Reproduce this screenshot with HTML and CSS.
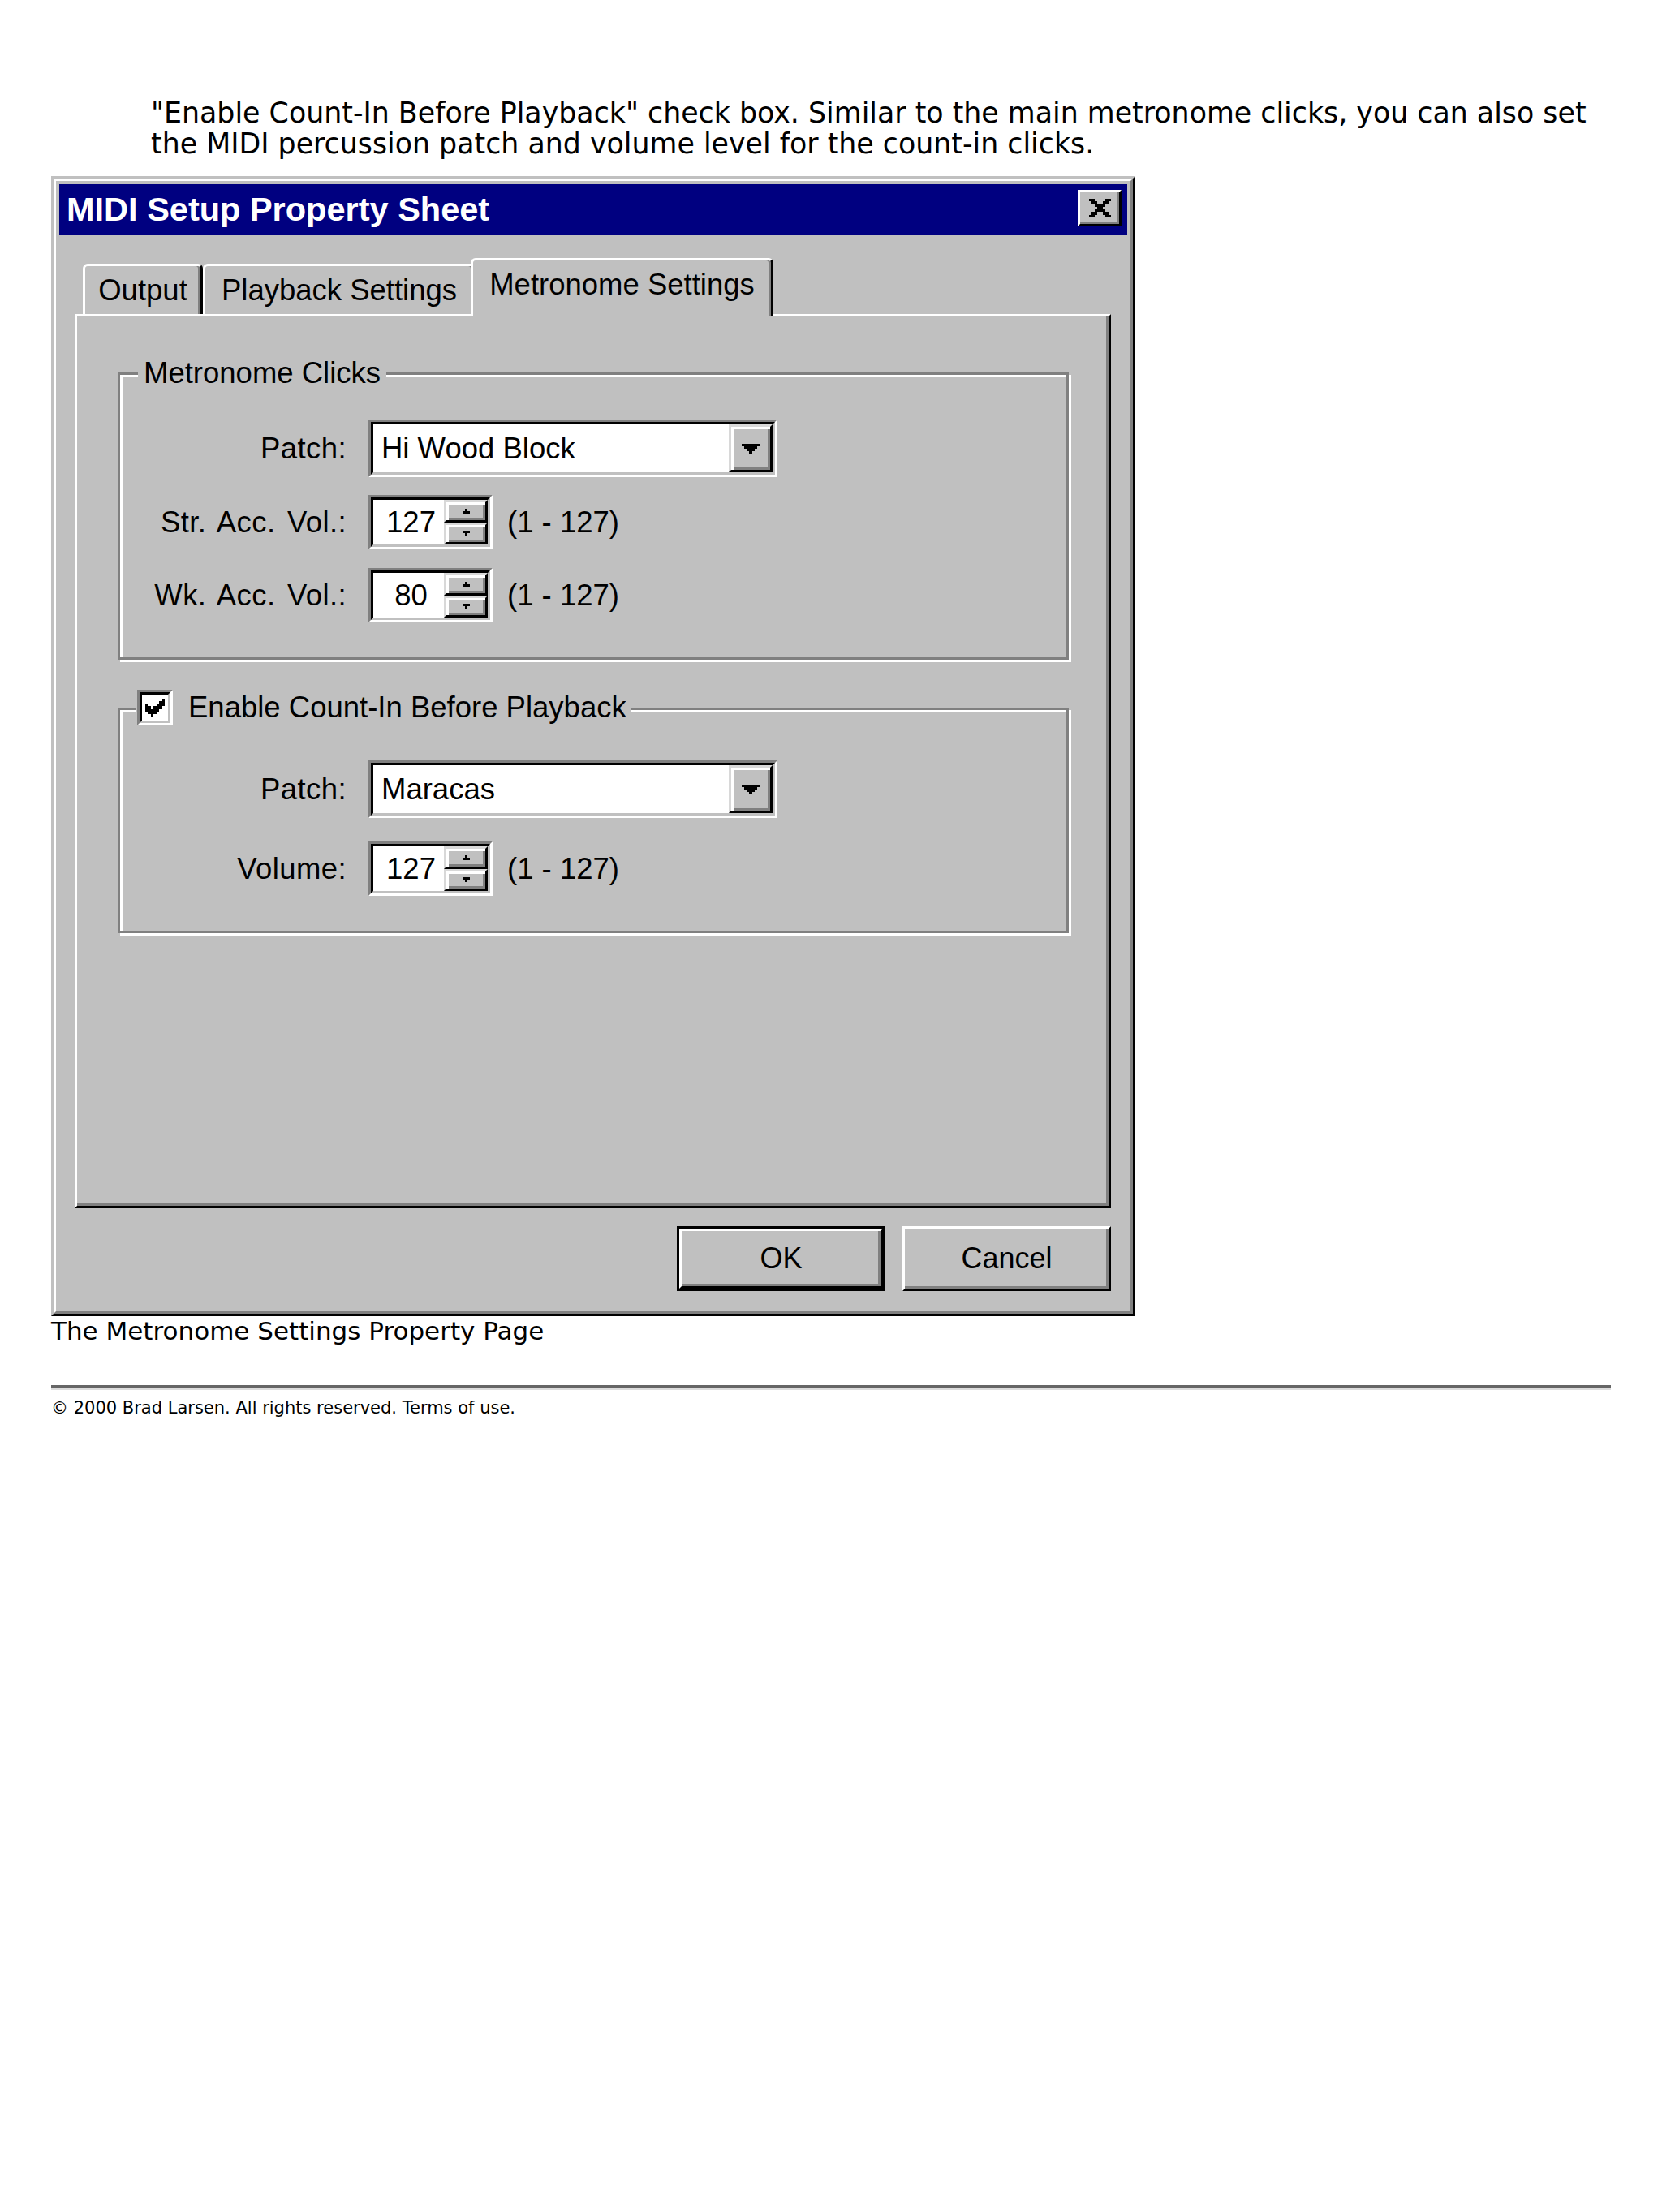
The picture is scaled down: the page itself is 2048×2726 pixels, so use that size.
FILE: index.html
```html
<!DOCTYPE html>
<html lang="en">
<head>
<meta charset="utf-8">
<title>MIDI Setup Property Sheet</title>
<link rel="stylesheet" href="styles.css">
</head>
<body>
<p class="intro">"Enable Count-In Before Playback" check box. Similar to the main metronome clicks, you can also set<br>the MIDI percussion patch and volume level for the count-in clicks.</p>

<div class="dialog">
  <div class="dialog-frame">
    <div class="titlebar">
      <span class="title">MIDI Setup Property Sheet</span>
      <div class="close-btn">
        <svg class="close-icon" viewBox="0 0 8 7" preserveAspectRatio="none" shape-rendering="crispEdges"><path d="M0 0h2v1H0z M6 0h2v1H6z M1 1h2v1H1z M5 1h2v1H5z M2 2h4v1H2z M3 3h2v1H3z M2 4h4v1H2z M1 5h2v1H1z M5 5h2v1H5z M0 6h2v1H0z M6 6h2v1H6z" fill="#000"/></svg>
      </div>
    </div>
    <div class="dialog-body">
      <div class="tabs">
        <div class="tab tab-output">Output</div>
        <div class="tab tab-playback">Playback Settings</div>
        <div class="tab tab-active">Metronome Settings</div>
      </div>
      <div class="panel">
        <div class="group group-clicks">
          <div class="group-label">Metronome Clicks</div>
          <div class="row">
            <span class="field-label">Patch:</span>
            <div class="combo">
              <div class="combo-inner">
                <span class="combo-text">Hi Wood Block</span>
                <div class="combo-btn">
                  <svg class="drop-arrow" viewBox="0 0 7 4" preserveAspectRatio="none" shape-rendering="crispEdges"><path d="M0 0h7v1H0z M1 1h5v1H1z M2 2h3v1H2z M3 3h1v1H3z" fill="#000"/></svg>
                </div>
              </div>
            </div>
          </div>
          <div class="row row-gap-a">
            <span class="field-label">Str. Acc. Vol.:</span>
            <div class="spin">
              <div class="spin-inner">
                <span class="spin-value">127</span>
                <div class="spin-btns">
                  <div class="spin-btn"><svg class="spin-arrow" viewBox="0 0 3 2" preserveAspectRatio="none" shape-rendering="crispEdges"><path d="M1 0h1v1H1z M0 1h3v1H0z" fill="#000"/></svg></div>
                  <div class="spin-btn"><svg class="spin-arrow" viewBox="0 0 3 2" preserveAspectRatio="none" shape-rendering="crispEdges"><path d="M0 0h3v1H0z M1 1h1v1H1z" fill="#000"/></svg></div>
                </div>
              </div>
            </div>
            <span class="range">(1 - 127)</span>
          </div>
          <div class="row row-gap-b">
            <span class="field-label">Wk. Acc. Vol.:</span>
            <div class="spin">
              <div class="spin-inner">
                <span class="spin-value">80</span>
                <div class="spin-btns">
                  <div class="spin-btn"><svg class="spin-arrow" viewBox="0 0 3 2" preserveAspectRatio="none" shape-rendering="crispEdges"><path d="M1 0h1v1H1z M0 1h3v1H0z" fill="#000"/></svg></div>
                  <div class="spin-btn"><svg class="spin-arrow" viewBox="0 0 3 2" preserveAspectRatio="none" shape-rendering="crispEdges"><path d="M0 0h3v1H0z M1 1h1v1H1z" fill="#000"/></svg></div>
                </div>
              </div>
            </div>
            <span class="range">(1 - 127)</span>
          </div>
        </div>

        <div class="group group-countin">
          <div class="group-label check-label">
            <div class="checkbox">
              <div class="checkbox-inner">
                <svg class="check-mark" viewBox="0 0 7 7" preserveAspectRatio="none" shape-rendering="crispEdges"><path d="M6 0h1v1H6z M5 1h2v1H5z M0 2h1v1H0z M4 2h3v1H4z M0 3h2v1H0z M3 3h3v1H3z M0 4h5v1H0z M1 5h3v1H1z M2 6h1v1H2z" fill="#000"/></svg>
              </div>
            </div>
            <span class="check-text">Enable Count-In Before Playback</span>
          </div>
          <div class="row">
            <span class="field-label">Patch:</span>
            <div class="combo">
              <div class="combo-inner">
                <span class="combo-text">Maracas</span>
                <div class="combo-btn">
                  <svg class="drop-arrow" viewBox="0 0 7 4" preserveAspectRatio="none" shape-rendering="crispEdges"><path d="M0 0h7v1H0z M1 1h5v1H1z M2 2h3v1H2z M3 3h1v1H3z" fill="#000"/></svg>
                </div>
              </div>
            </div>
          </div>
          <div class="row row-gap-c">
            <span class="field-label">Volume:</span>
            <div class="spin">
              <div class="spin-inner">
                <span class="spin-value">127</span>
                <div class="spin-btns">
                  <div class="spin-btn"><svg class="spin-arrow" viewBox="0 0 3 2" preserveAspectRatio="none" shape-rendering="crispEdges"><path d="M1 0h1v1H1z M0 1h3v1H0z" fill="#000"/></svg></div>
                  <div class="spin-btn"><svg class="spin-arrow" viewBox="0 0 3 2" preserveAspectRatio="none" shape-rendering="crispEdges"><path d="M0 0h3v1H0z M1 1h1v1H1z" fill="#000"/></svg></div>
                </div>
              </div>
            </div>
            <span class="range">(1 - 127)</span>
          </div>
        </div>
      </div>
      <div class="buttons">
        <div class="btn-default"><div class="btn btn-inner">OK</div></div>
        <div class="btn">Cancel</div>
      </div>
    </div>
  </div>
</div>
<p class="caption">The Metronome Settings Property Page</p>
<hr class="rule">
<p class="footer">© 2000 Brad Larsen. All rights reserved. Terms of use.</p>
</body>
</html>
```

FILE: styles.css
```css
html, body {
  background: #fff;
}
body {
  margin: 0;
  padding: 120px 63px 0 63px;
  color: #000;
  font-family: "DejaVu Sans", Verdana, sans-serif;
}
.intro {
  margin: 0 0 21px 123px;
  font-size: 34.8px;
  line-height: 38px;
  white-space: nowrap;
}

/* ---------- dialog ---------- */
.dialog {
  width: 1336px;
  height: 1405px;
  box-sizing: border-box;
  border: 3px solid;
  border-color: #c0c0c0 #000 #000 #c0c0c0;
  background: #c0c0c0;
  font-family: "Liberation Sans", Arial, sans-serif;
  font-size: 36.5px;
  color: #000;
}
.dialog-frame {
  height: 100%;
  box-sizing: border-box;
  border: 3px solid;
  border-color: #fff #808080 #808080 #fff;
  padding: 4px;
  display: flex;
  flex-direction: column;
}
.titlebar {
  height: 62px;
  flex: none;
  background: #000080;
  display: flex;
  align-items: center;
  justify-content: space-between;
  padding: 0 7px 0 9px;
}
.title {
  color: #fff;
  font-weight: bold;
  font-size: 41.5px;
  line-height: 1;
}
.close-btn {
  width: 54px;
  height: 45px;
  box-sizing: border-box;
  border: 3px solid;
  border-color: #fff #000 #000 #fff;
  box-shadow: inset -3px -3px 0 #808080;
  background: #c0c0c0;
  display: flex;
  align-items: center;
  justify-content: center;
  margin-top: -3px;
}
.close-icon {
  width: 27px;
  height: 23px;
  display: block;
}

.dialog-body {
  padding: 0 20px 0 19px;
}

/* ---------- tabs ---------- */
.tabs {
  height: 98px;
  display: flex;
  align-items: flex-end;
  padding-left: 10px;
}
.tab {
  box-sizing: border-box;
  height: 62px;
  border-top: 3px solid #fff;
  border-left: 3px solid #fff;
  border-right: 3px solid #000;
  border-radius: 6px 6px 0 0;
  box-shadow: inset -3px 0 0 #808080;
  background: #c0c0c0;
  display: flex;
  align-items: center;
  justify-content: center;
  font-size: 36.5px;
  white-space: nowrap;
}
.tab-output {
  width: 148px;
}
.tab-playback {
  width: 336px;
}
.tab-active {
  position: relative;
  z-index: 2;
  width: 373px;
  height: 72px;
  margin-left: -6px;
  margin-bottom: -3px;
  padding-bottom: 9px;
}

/* ---------- panel ---------- */
.panel {
  height: 1102px;
  box-sizing: border-box;
  border: 3px solid;
  border-color: #fff #000 #000 #fff;
  box-shadow: inset -3px -3px 0 #808080;
  padding: 69px 0 0 50px;
}
.group {
  position: relative;
  width: 1172px;
  box-sizing: border-box;
  border: 3px solid #808080;
  box-shadow: inset 3px 3px 0 #fff, 3px 3px 0 #fff;
}
.group-clicks {
  padding: 55px 0 43px 0;
}
.group-countin {
  margin-top: 59px;
  padding: 62px 0 43px 0;
}
.group-label {
  position: absolute;
  top: -23px;
  left: 22px;
  height: 42px;
  line-height: 42px;
  padding: 0 7px;
  background: #c0c0c0;
  white-space: nowrap;
}
.check-label {
  top: -25px;
  left: 19px;
  height: 44px;
  padding: 0 5px 0 2px;
  display: flex;
  align-items: center;
}
.checkbox {
  width: 44px;
  height: 44px;
  box-sizing: border-box;
  border: 3px solid;
  border-color: #808080 #fff #fff #808080;
}
.checkbox-inner {
  height: 100%;
  box-sizing: border-box;
  border: 3px solid;
  border-color: #000 #c0c0c0 #c0c0c0 #000;
  background: #fff;
  display: flex;
  align-items: center;
  justify-content: center;
}
.check-mark {
  width: 24px;
  height: 22px;
  display: block;
}
.check-text {
  margin-left: 19px;
}

.row {
  display: flex;
  align-items: center;
}
.row-gap-a {
  margin-top: 22px;
}
.row-gap-b {
  margin-top: 23px;
}
.row-gap-c {
  margin-top: 29px;
}
.field-label {
  width: 279px;
  margin-right: 27px;
  text-align: right;
  white-space: nowrap;
  letter-spacing: 0.4px;
  word-spacing: 4px;
}

/* combobox */
.combo {
  width: 504px;
  height: 71px;
  box-sizing: border-box;
  border: 3px solid;
  border-color: #808080 #fff #fff #808080;
}
.combo-inner {
  height: 100%;
  box-sizing: border-box;
  border: 3px solid;
  border-color: #000 #c0c0c0 #c0c0c0 #000;
  background: #fff;
  display: flex;
  align-items: center;
}
.combo-text {
  flex: 1;
  padding-left: 10px;
  white-space: nowrap;
}
.combo-btn {
  width: 54px;
  height: 100%;
  box-sizing: border-box;
  border: 3px solid;
  border-color: #d8d8d8 #000 #000 #d8d8d8;
  box-shadow: inset 3px 3px 0 #fff, inset -3px -3px 0 #808080;
  background: #c0c0c0;
  display: flex;
  align-items: center;
  justify-content: center;
}
.drop-arrow {
  width: 22px;
  height: 12px;
  display: block;
}

/* spin edit */
.spin {
  width: 153px;
  height: 67px;
  box-sizing: border-box;
  border: 3px solid;
  border-color: #808080 #fff #fff #808080;
}
.spin-inner {
  height: 100%;
  box-sizing: border-box;
  border: 3px solid;
  border-color: #000 #c0c0c0 #c0c0c0 #000;
  background: #fff;
  display: flex;
}
.spin-value {
  flex: 1;
  text-align: center;
  padding-left: 6px;
  align-self: center;
}
.spin-btns {
  width: 54px;
  display: flex;
  flex-direction: column;
}
.spin-btn {
  flex: 1;
  box-sizing: border-box;
  border: 3px solid;
  border-color: #d8d8d8 #000 #000 #d8d8d8;
  box-shadow: inset 3px 3px 0 #fff, inset -3px -3px 0 #808080;
  background: #c0c0c0;
  display: flex;
  align-items: center;
  justify-content: center;
}
.spin-arrow {
  width: 9px;
  height: 6px;
  display: block;
}
.range {
  margin-left: 18px;
  white-space: nowrap;
}

/* buttons */
.buttons {
  display: flex;
  justify-content: flex-end;
  gap: 21px;
  margin-top: 22px;
}
.btn {
  width: 257px;
  height: 80px;
  box-sizing: border-box;
  border: 3px solid;
  border-color: #fff #000 #000 #fff;
  box-shadow: inset -3px -3px 0 #808080;
  background: #c0c0c0;
  display: flex;
  align-items: center;
  justify-content: center;
  font-size: 36px;
}
.btn-default {
  width: 257px;
  height: 80px;
  box-sizing: border-box;
  border: 3px solid #000;
}
.btn-inner {
  width: 100%;
  height: 100%;
}

/* ---------- page bits ---------- */
.caption {
  margin: 0;
  font-size: 31px;
  line-height: 36px;
}
.rule {
  margin: 49px 0 0 0;
  height: 0;
  border: 0;
  border-top: 3px solid #666;
  border-bottom: 3px solid #dcdcdc;
}
.footer {
  margin: 10px 0 0 0;
  font-size: 21px;
  line-height: 24px;
}
```
